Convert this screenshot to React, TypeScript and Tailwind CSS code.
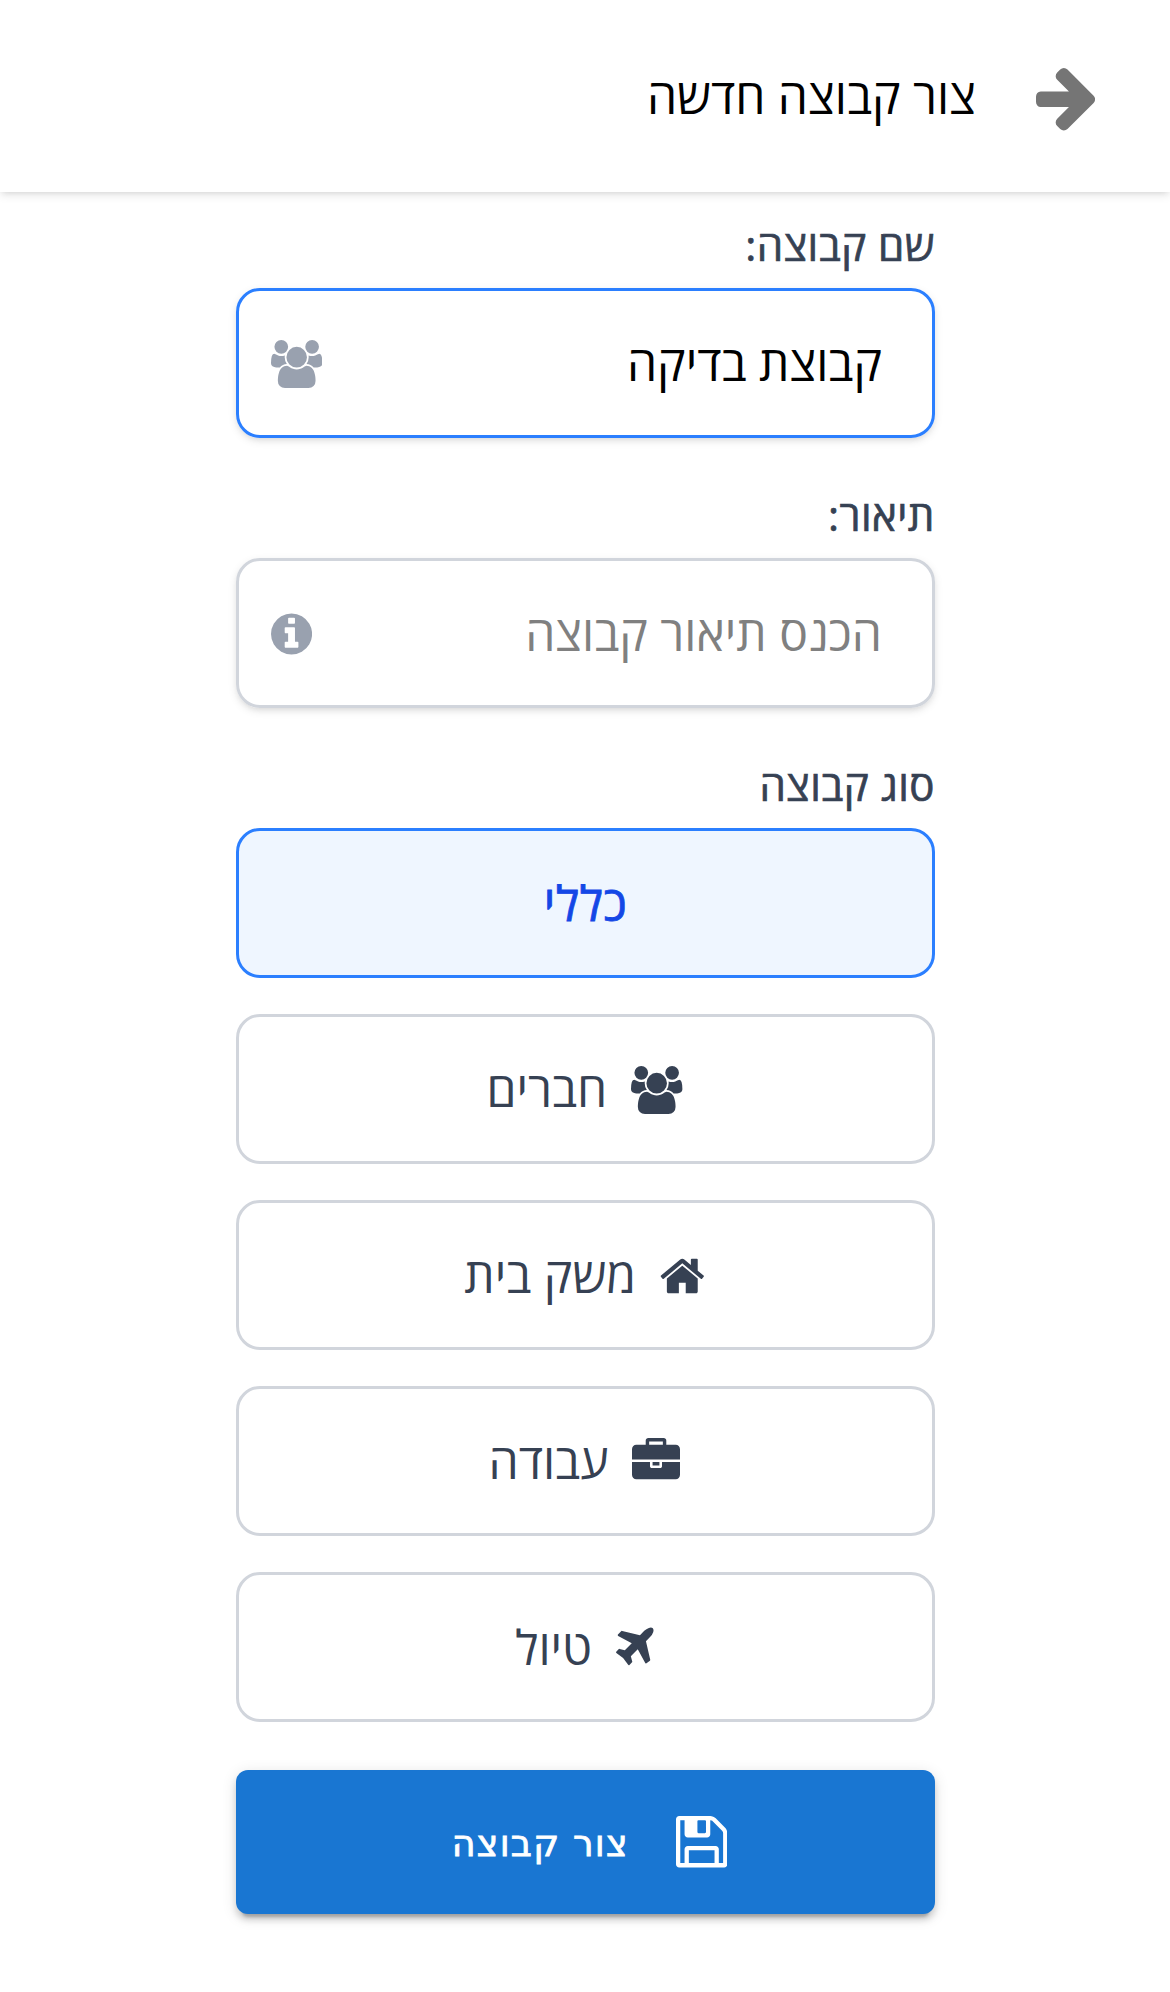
import React, { useState } from "react";

type GlyphProps = { viewBox: string; d: string; className: string };

function Glyph({ viewBox, d, className }: GlyphProps) {
  return (
    <svg viewBox={viewBox} fill="currentColor" className={`shrink-0 ${className}`} aria-hidden="true">
      <path d={d} />
    </svg>
  );
}

const ARROW =
  "M1600 960q0 54-37 91l-651 651q-39 37-91 37-51 0-90-37l-75-75q-38-38-38-91t38-91l293-293h-704q-52 0-84.5-37.5t-32.5-90.5v-128q0-53 32.5-90.5t84.5-37.5h704l-293-294q-38-36-38-90t38-90l75-75q38-38 90-38 53 0 91 38l651 651q37 35 37 90z";
const USERS =
  "M593 896q-162 5-265 128h-134q-82 0-138-40.5t-56-118.5q0-353 124-353 6 0 43.5 21t97.5 42.5 119 21.5q67 0 133-23-5 37-5 66 0 139 81 256zm1071 637q0 120-73 189.5t-194 69.5h-874q-121 0-194-69.5t-73-189.5q0-53 3.5-103.5t14-109 26.5-108.5 43-97.5 62-81 85.5-53.5 111.5-20q10 0 43 21.5t73 48 107 48 135 21.5 135-21.5 107-48 73-48 43-21.5q61 0 111.5 20t85.5 53.5 62 81 43 97.5 26.5 108.5 14 109 3.5 103.5zm-1024-1277q0 106-75 181t-181 75-181-75-75-181 75-181 181-75 181 75 75 181zm704 384q0 159-112.5 271.5t-271.5 112.5-271.5-112.5-112.5-271.5 112.5-271.5 271.5-112.5 271.5 112.5 112.5 271.5zm576 225q0 78-56 118.5t-138 40.5h-134q-103-123-265-128 81-117 81-256 0-29-5-66 66 23 133 23 59 0 119-21.5t97.5-42.5 43.5-21q124 0 124 353zm-128-609q0 106-75 181t-181 75-181-75-75-181 75-181 181-75 181 75 75 181z";
const INFO =
  "M1152 1376v-160q0-14-9-23t-23-9h-96v-512q0-14-9-23t-23-9h-320q-14 0-23 9t-9 23v160q0 14 9 23t23 9h96v320h-96q-14 0-23 9t-9 23v160q0 14 9 23t23 9h448q14 0 23-9t9-23zm-128-896v-160q0-14-9-23t-23-9h-192q-14 0-23 9t-9 23v160q0 14 9 23t23 9h192q14 0 23-9t9-23zm640 416q0 209-103 385.5t-279.5 279.5-385.5 103-385.5-103-279.5-279.5-103-385.5 103-385.5 279.5-279.5 385.5-103 385.5 103 279.5 279.5 103 385.5z";
const HOME =
  "M1472 992v480q0 26-19 45t-45 19h-384v-384h-256v384h-384q-26 0-45-19t-19-45v-480q0-1 .5-3t.5-3l575-474 575 474q1 2 1 6zm223-69l-62 74q-8 9-21 11h-3q-13 0-21-7l-692-577-692 577q-12 8-24 7-13-2-21-11l-62-74q-8-10-7-23.5t11-21.5l719-599q32-26 76-26t76 26l244 204v-195q0-14 9-23t23-9h192q14 0 23 9t9 23v408l219 182q10 8 11 21.5t-7 23.5z";
const BRIEFCASE =
  "M640 256h512v-128h-512v128zm1152 640v480q0 66-47 113t-113 47h-1472q-66 0-113-47t-47-113v-480h672v160q0 26 19 45t45 19h320q26 0 45-19t19-45v-160h672zm-768 0v128h-256v-128h256zm768-480v384h-1792v-384q0-66 47-113t113-47h352v-160q0-40 28-68t68-28h576q40 0 68 28t28 68v160h352q66 0 113 47t47 113z";
const PLANE =
  "M1568 160q44 52 12 148t-108 172l-161 161 160 696q5 19-12 33l-128 96q-7 6-19 6-4 0-7-1-15-3-21-16l-279-508-259 259 53 194q5 17-8 31l-96 96q-9 9-23 9h-2q-15-2-24-13l-189-252-252-189q-11-7-13-23-1-13 9-25l96-97q9-9 23-9 6 0 8 1l194 53 259-259-508-279q-14-8-17-24-2-16 9-27l128-128q14-13 30-8l665 159 160-160q76-76 172-108t148 12z";
const SAVE =
  "M512 1536h768v-384h-768v384zm896 0h128v-896q0-14-10-38.5t-20-34.5l-281-281q-10-10-34-20t-39-10v416q0 40-28 68t-68 28h-576q-40 0-68-28t-28-68v-416h-128v1280h128v-416q0-40 28-68t68-28h832q40 0 68 28t28 68v416zm-384-928v-320q0-13-9.5-22.5t-22.5-9.5h-192q-13 0-22.5 9.5t-9.5 22.5v320q0 13 9.5 22.5t22.5 9.5h192q13 0 22.5-9.5t9.5-22.5zm640 32v928q0 40-28 68t-68 28h-1344q-40 0-68-28t-28-68v-1344q0-40 28-68t68-28h928q40 0 88 20t76 48l280 280q28 28 48 76t20 88z";

const groupTypes = [
  { label: "כללי", icon: null },
  { label: "חברים", icon: <Glyph viewBox="0 0 1920 1792" d={USERS} className="mt-px h-12 w-[51.4px]" /> },
  { label: "משק בית", icon: <Glyph viewBox="64 0 1664 1792" d={HOME} className="mt-px h-12 w-[44.6px]" /> },
  { label: "עבודה", icon: <Glyph viewBox="0 0 1792 1792" d={BRIEFCASE} className="mt-px size-12" /> },
  { label: "טיול", icon: <Glyph viewBox="192 0 1408 1792" d={PLANE} className="mt-px h-12 w-[37.7px]" /> },
];

const field =
  "flex h-[150px] items-center justify-between rounded-[24px] border-[3px] ps-[50px] pe-8 shadow-[0_3px_9px_rgba(0,0,0,0.1),0_3px_6px_-3px_rgba(0,0,0,0.1)]";
const input = "w-[460px] bg-transparent outline-none placeholder:text-[#808080]";
const caption =
  "mb-[13px] text-[42px] leading-[60px] font-medium tracking-[0.5px] [-webkit-text-stroke:0.7px_currentColor]";

export default function App() {
  const [selected, setSelected] = useState("כללי");
  return (
    <div dir="rtl" className="h-[1992px] overflow-hidden bg-white font-['Open_Sans',sans-serif] text-[48px] leading-[72px] text-[#364153]">
      <header className="flex h-[192px] items-center gap-[60px] ps-[75px] text-black shadow-[0_3px_9px_rgba(0,0,0,0.1),0_3px_6px_-3px_rgba(0,0,0,0.1)]">
        <Glyph viewBox="128 181 1472 1558" d={ARROW} className="mt-[7px] h-[62.6px] w-[59.1px] text-[#757575]" />
        <h1>צור קבוצה חדשה</h1>
      </header>
      <main className="ms-[235px] flex w-[699px] flex-col pt-[23px]">
        <label htmlFor="name" className={caption}>שם קבוצה:</label>
        <div className={`${field} border-[#2b7fff]`}>
          <input id="name" defaultValue="קבוצת בדיקה" className={`${input} text-black`} />
          <Glyph viewBox="0 0 1920 1792" d={USERS} className="mt-px h-12 w-[51.4px] text-[#99a1af]" />
        </div>
        <label htmlFor="desc" className={`mt-[47px] ${caption}`}>תיאור:</label>
        <div className={`${field} border-[#d1d5dc]`}>
          <input id="desc" placeholder="הכנס תיאור קבוצה" className={input} />
          <Glyph viewBox="128 0 1536 1792" d={INFO} className="mt-px h-12 w-[41.1px] text-[#99a1af]" />
        </div>
        <h2 className={`mt-[47px] ${caption}`}>סוג קבוצה</h2>
        <div className="flex flex-col gap-9">
          {groupTypes.map(({ label, icon }) => (
            <button
              key={label}
              onClick={() => setSelected(label)}
              className={`flex h-[150px] items-center justify-center gap-6 rounded-[24px] border-[3px] ${
                selected === label
                  ? "border-[#2b7fff] bg-[#eff6ff] font-medium tracking-[0.5px] text-[#1447e6] [-webkit-text-stroke:0.8px_currentColor]"
                  : "border-[#d1d5dc] ps-0.5"
              }`}
            >
              {icon}
              <span>{label}</span>
            </button>
          ))}
        </div>
        <button className="mt-12 flex h-[144px] items-center justify-center gap-[47px] rounded-xl bg-[#1976d2] pe-[8px] font-['DejaVu_Sans',sans-serif] text-[36.5px] font-medium tracking-[1.2px] text-white shadow-[0_9px_3px_-6px_rgba(0,0,0,0.2),0_6px_6px_0_rgba(0,0,0,0.14),0_3px_15px_0_rgba(0,0,0,0.12)]">
          <Glyph viewBox="128 128 1536 1536" d={SAVE} className="size-[51.4px]" />
          <span className="mt-[3px] [-webkit-text-stroke:0.8px_currentColor]">צור קבוצה</span>
        </button>
      </main>
    </div>
  );
}
